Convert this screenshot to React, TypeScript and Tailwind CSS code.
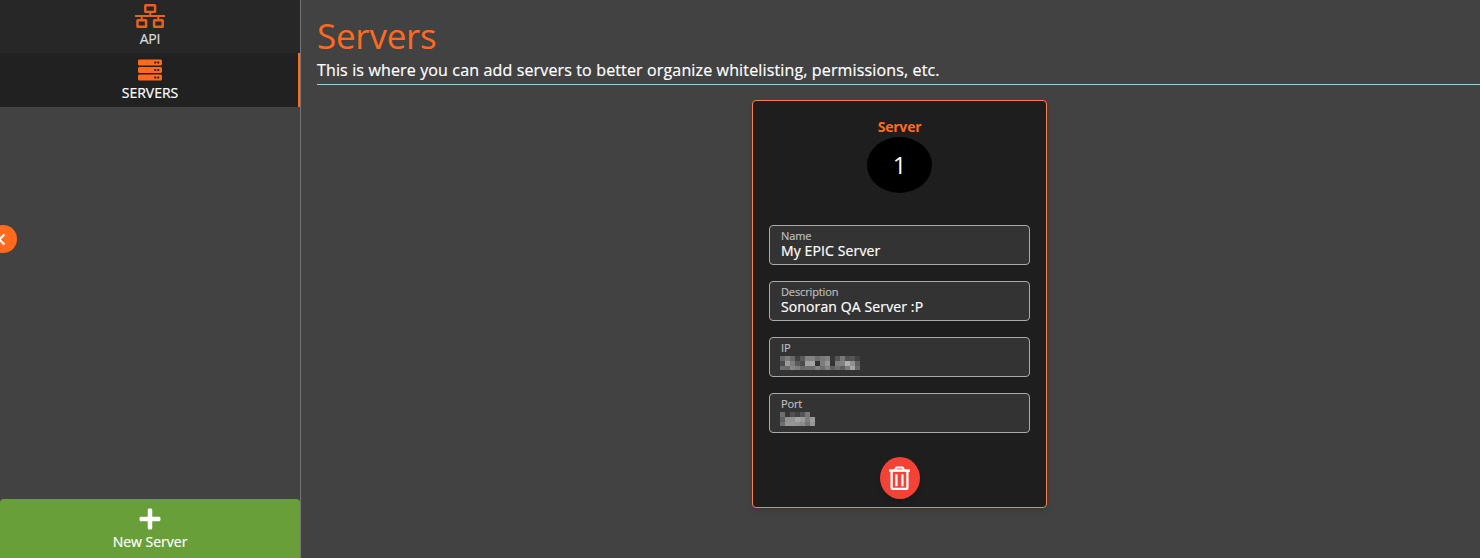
import { FaServer, FaPlus, FaChevronLeft } from "react-icons/fa";

const ipMask = [
  [105, 125, 105, 65, 90, 130, 130, 110, 120, 130, 55, 85, 120, 80, 85, 65],
  [75, 155, 125, 90, 75, 160, 165, 50, 125, 150, 50, 125, 130, 175, 145, 95],
  [110, 105, 135, 125, 105, 110, 110, 130, 110, 130, 95, 110, 95, 125, 165, 105],
];
const portMask = [
  [110, 55, 80, 65, 85, 120, 51],
  [95, 145, 145, 165, 155, 125, 155],
  [110, 150, 150, 145, 140, 115, 150],
];

function NetworkIcon({ className }: { className: string }) {
  return (
    <svg viewBox="0 0 30 24" className={className} fill="none" stroke="currentColor">
      <rect x="10.3" y="1.2" width="9.8" height="6.7" rx="0.4" strokeWidth="2.4" />
      <rect x="2.5" y="16.2" width="8.6" height="6.6" rx="0.4" strokeWidth="2.5" />
      <rect x="19.1" y="16.2" width="8.6" height="6.6" rx="0.4" strokeWidth="2.5" />
      <path d="M0 12h30M15.2 9v3M6.8 12v3.5M23.3 12v3.5" strokeWidth="2" />
    </svg>
  );
}

function TrashIcon({ className }: { className: string }) {
  return (
    <svg viewBox="0 0 21 24" className={className} fill="none" stroke="currentColor">
      <path d="M0 4.6h21" strokeWidth="2.5" />
      <path d="M5.8 4.2 7.3 1.5h6.4l1.5 2.7" strokeWidth="2.1" strokeLinejoin="round" />
      <path d="M2.6 5v17.1q0 .7.7.7h14.4q.7 0 .7-.7V5" strokeWidth="2.3" />
      <path d="M7.4 8.2v12M13.4 8.2v12" strokeWidth="2.3" />
    </svg>
  );
}

function Mask({ rows }: { rows: number[][] }) {
  return (
    <div className="-ml-px mt-[2px] w-fit">
      {rows.map((row, y) => (
        <div key={y} className="flex h-[5px] last:h-[4px]">
          {row.map((v, x) => (
            <span key={x} className="w-[5px]" style={{ backgroundColor: `rgb(${v},${v},${v})` }} />
          ))}
        </div>
      ))}
    </div>
  );
}

function Field({ label, value, mask }: { label: string; value?: string; mask?: number[][] }) {
  return (
    <div className="h-10 rounded-[4px] border border-[#aaaaaa] bg-[#333333] pl-[11px] pt-[3px]">
      <div className="h-[13px] text-[11px] leading-[13px] tracking-[-0.13px] text-[#bdbdbd] [-webkit-text-stroke:0.2px]">{label}</div>
      {mask ? (
        <Mask rows={mask} />
      ) : (
        <div className="text-[14px] leading-[17px] tracking-[0.12px] text-white [-webkit-text-stroke:0.2px]">{value}</div>
      )}
    </div>
  );
}

export default function App() {
  return (
    <div className="relative flex h-[558px] w-full overflow-hidden bg-[#424242] font-['Open_Sans','Noto_Sans',sans-serif] text-white">
      <aside className="flex w-[301px] shrink-0 flex-col border-r border-[#757575]">
        <div className="flex h-[53px] flex-col items-center bg-[#272727] pt-[4px]">
          <NetworkIcon className="h-6 w-[30px] text-[#e8611f]" />
          <span className="mt-[2px] text-[14px] leading-[18px] tracking-[-0.2px] text-[#dddddd] [-webkit-text-stroke:0.2px]">API</span>
        </div>
        <div className="flex h-[54px] flex-col items-center border-r-2 border-[#ff6a1f] bg-[#212121] pl-[2px] pt-[5px]">
          <FaServer className="size-6 text-[#ff6a1f]" />
          <span className="mt-[2px] text-[14px] leading-[18px] [-webkit-text-stroke:0.2px]">SERVERS</span>
        </div>
        <button className="mt-auto flex h-[59px] flex-col items-center rounded-t-[4px] bg-[#689f38] pt-[8px]">
          <FaPlus className="size-6" />
          <span className="mt-[2px] text-[14px] leading-[18px] [-webkit-text-stroke:0.2px]">New Server</span>
        </button>
      </aside>

      <button className="absolute left-[-11px] top-[225px] flex size-7 items-center justify-center rounded-full bg-[#ff6a1f] pr-[4px]">
        <FaChevronLeft className="size-[13px] overflow-visible" stroke="currentColor" strokeWidth={12} />
      </button>

      <main className="flex flex-1 flex-col pl-4">
        <h1 className="mt-[12px] text-[35px] leading-[48px] tracking-[-0.25px] text-[#ff6a1f]">Servers</h1>
        <p className="h-[25px] border-b border-[#9fcbdc] text-[16px] leading-[20px] tracking-[0.145px] [-webkit-text-stroke:0.2px]">
          This is where you can add servers to better organize whitelisting, permissions, etc.
        </p>
        <section className="ml-[435px] mt-[15px] flex h-[408px] w-[295px] flex-col items-center rounded-[4px] border border-[#ff7f50] bg-[#1e1e1e] px-4 shadow-md">
          <h2 className="mt-[16px] text-[14px] font-bold leading-[19px] tracking-[-0.2px] text-[#ff6a1f]">Server</h2>
          <div className="mt-px flex h-14 w-[65px] items-center justify-center rounded-[50%] bg-black text-[24px]">1</div>
          <div className="mt-8 flex w-full flex-col gap-4">
            <Field label="Name" value="My EPIC Server" />
            <Field label="Description" value="Sonoran QA Server :P" />
            <Field label="IP" mask={ipMask} />
            <Field label="Port" mask={portMask} />
          </div>
          <button className="mt-6 flex h-[42px] w-10 items-center justify-center rounded-[50%] bg-[#f44336] pr-px shadow-md">
            <TrashIcon className="h-6 w-[21px]" />
          </button>
        </section>
      </main>
    </div>
  );
}
